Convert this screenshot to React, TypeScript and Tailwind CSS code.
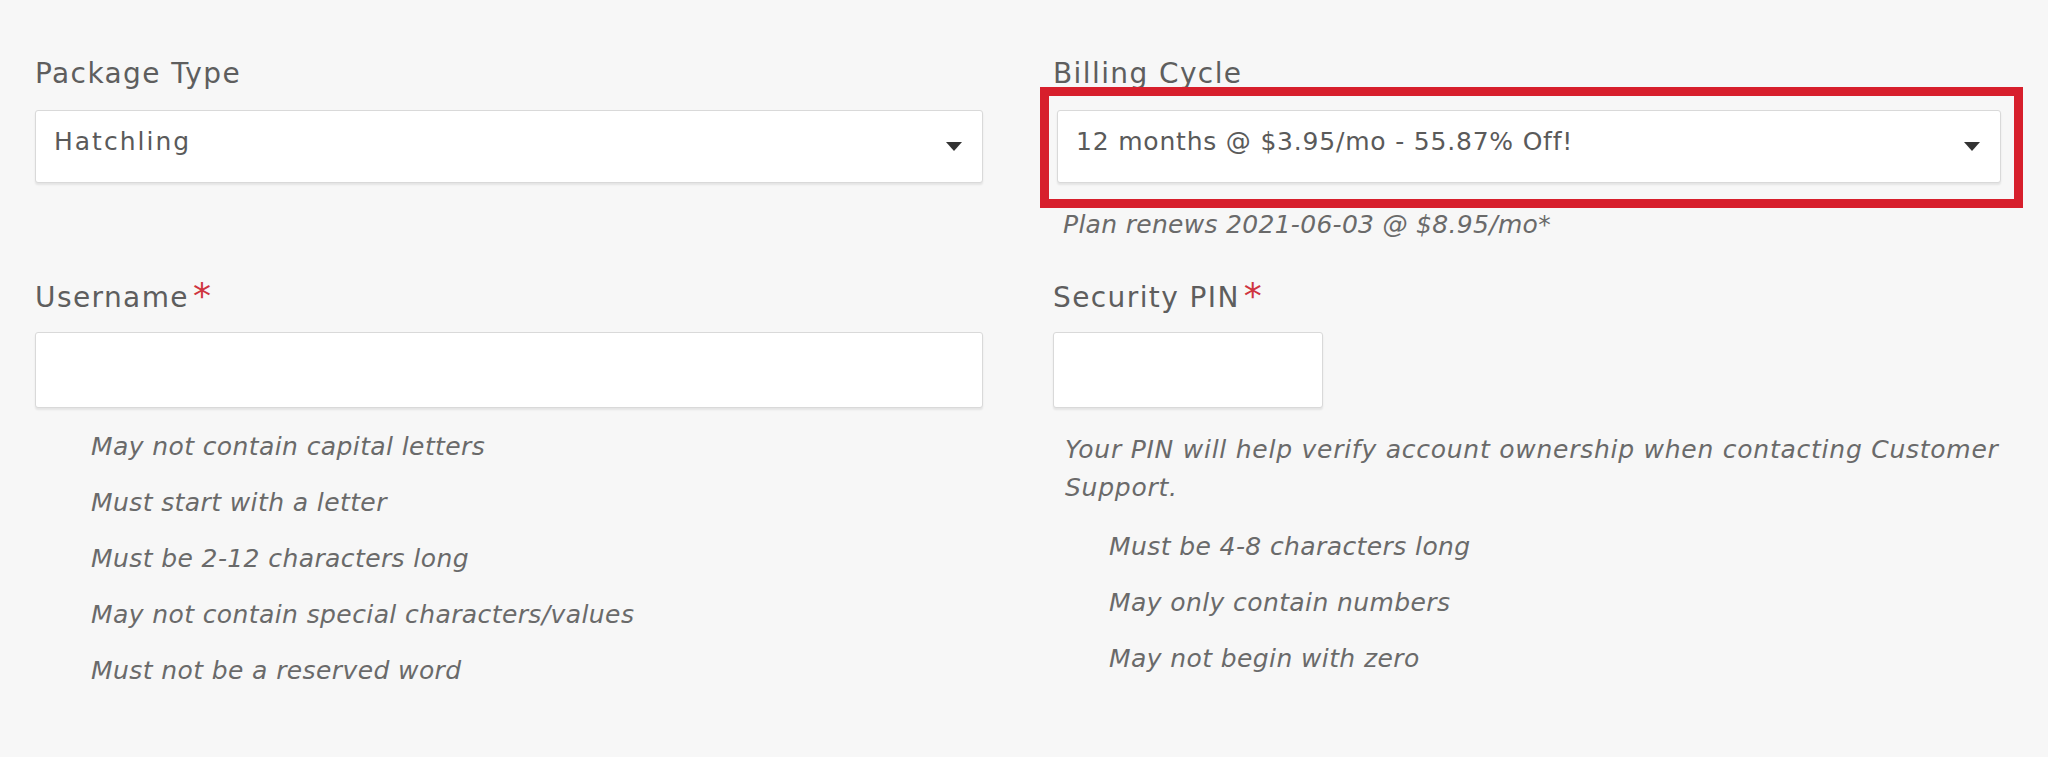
const usernameRules = [
  'May not contain capital letters',
  'Must start with a letter',
  'Must be 2-12 characters long',
  'May not contain special characters/values',
  'Must not be a reserved word',
]

const pinRules = ['Must be 4-8 characters long', 'May only contain numbers', 'May not begin with zero']

function Caret() {
  return (
    <svg width="16" height="9" viewBox="0 0 16 9" className="shrink-0">
      <path d="M0 0 L16 0 L8 9 Z" fill="#333" />
    </svg>
  )
}

function Select({ value, wide }: { value: string; wide?: boolean }) {
  return (
    <div className="flex h-[73px] items-center justify-between rounded-[3px] border border-[#d9d9d9] bg-white pl-[18px] pr-[20px] shadow-[0_2px_2px_rgba(0,0,0,0.08)]">
      <span className={wide ? 'mb-[9px] text-[25px] tracking-[2px] text-[#5a5a5a]' : 'mb-[9px] text-[25px] tracking-[0.8px] text-[#5a5a5a]'}>
        {value}
      </span>
      <Caret />
    </div>
  )
}

function Label({ text, required }: { text: string; required?: boolean }) {
  return (
    <div className="flex items-start text-[28px] leading-[36px] tracking-[1.4px] text-[#5e5e5e]">
      {text}
      {required && <span className="ml-[4px] -mt-[2px] text-[36px] leading-[36px] text-[#cf3440]">*</span>}
    </div>
  )
}

export default function App() {
  return (
    <div className="min-h-screen bg-[#f7f7f7] font-['DejaVu_Sans',sans-serif]">
      <div className="grid grid-cols-2 gap-x-[70px] pl-[35px] pr-[47px] pt-[56px]">
        {/* row 1 */}
        <div>
          <Label text="Package Type" />
          <div className="mt-[18px]">
            <Select value="Hatchling" wide />
          </div>
        </div>
        <div>
          <Label text="Billing Cycle" />
          <div className="relative mt-[18px] ml-[4px]">
            <Select value="12 months @ $3.95/mo - 55.87% Off!" />
            <div className="pointer-events-none absolute -left-[17px] -top-[23px] -right-[22px] -bottom-[25px] border-[9px] border-[#d71f2c]" />
          </div>
          <div className="mt-[27px] pl-[10px] text-[25px] italic leading-[30px] tracking-[0.3px] text-[#6a6a6a]">
            Plan renews 2021-06-03 @ $8.95/mo*
          </div>
        </div>

        {/* row 2 */}
        <div className="mt-[40px]">
          <Label text="Username" required />
          <div className="mt-[16px] h-[76px] rounded-[3px] border border-[#d9d9d9] bg-white shadow-[0_2px_2px_rgba(0,0,0,0.08)]" />
          <ul className="mt-[11px] pl-[56px] text-[25px] italic leading-[56px] tracking-[0.4px] text-[#6a6a6a]">
            {usernameRules.map((r) => (
              <li key={r}>{r}</li>
            ))}
          </ul>
        </div>
        <div className="mt-[40px]">
          <Label text="Security PIN" required />
          <div className="mt-[16px] h-[76px] w-[270px] rounded-[3px] border border-[#d9d9d9] bg-white shadow-[0_2px_2px_rgba(0,0,0,0.08)]" />
          <p className="mt-[23px] whitespace-nowrap pl-[12px] text-[25px] italic leading-[38px] tracking-[0.75px] text-[#6a6a6a]">
            Your PIN will help verify account ownership when contacting Customer
            <br />
            Support.
          </p>
          <ul className="mt-[12px] pl-[56px] text-[25px] italic leading-[56px] tracking-[0.4px] text-[#6a6a6a]">
            {pinRules.map((r) => (
              <li key={r}>{r}</li>
            ))}
          </ul>
        </div>
      </div>
    </div>
  )
}
